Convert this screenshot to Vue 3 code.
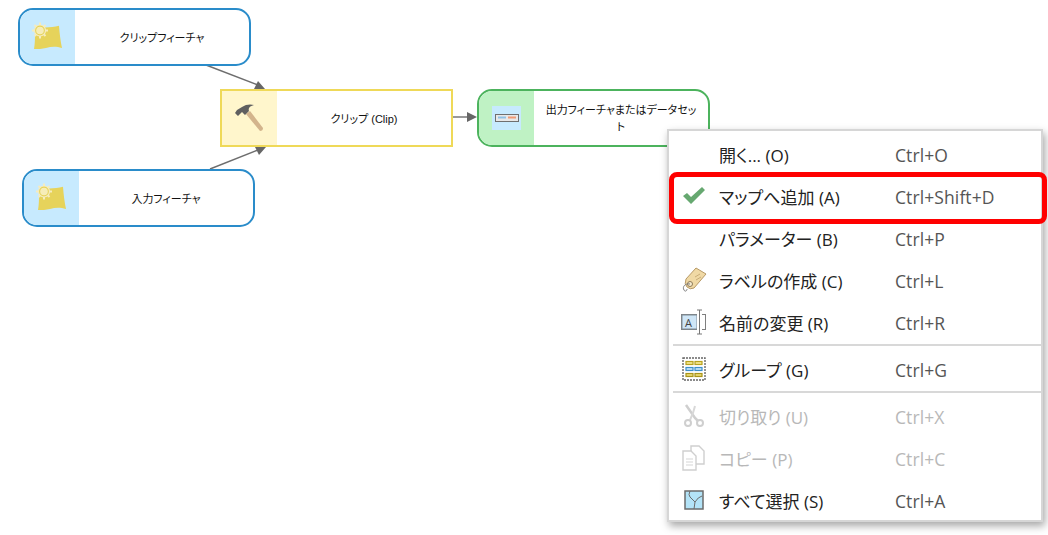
<script setup>
const nodes = [
  { id: 'a', cls: 'data', x: 18, y: 8, label: 'クリップフィーチャ', icon: 'feature' },
  { id: 'b', cls: 'data', x: 22, y: 169, label: '入力フィーチャ', icon: 'feature' },
  { id: 'c', cls: 'tool', x: 220, y: 89, label: 'クリップ (Clip)', icon: 'hammer' },
  { id: 'd', cls: 'out', x: 477, y: 89, label: '出力フィーチャまたはデータセッ\nト', icon: 'out' },
]
const menu = [
  { label: '開く... (O)', key: 'Ctrl+O' },
  { label: 'マップへ追加 (A)', key: 'Ctrl+Shift+D', icon: 'check' },
  { label: 'パラメーター (B)', key: 'Ctrl+P' },
  { label: 'ラベルの作成 (C)', key: 'Ctrl+L', icon: 'tag' },
  { label: '名前の変更 (R)', key: 'Ctrl+R', icon: 'rename', sep: true },
  { label: 'グループ (G)', key: 'Ctrl+G', icon: 'group', sep: true },
  { label: '切り取り (U)', key: 'Ctrl+X', icon: 'cut', off: true },
  { label: 'コピー (P)', key: 'Ctrl+C', icon: 'copy', off: true },
  { label: 'すべて選択 (S)', key: 'Ctrl+A', icon: 'all' },
]
</script>

<template>
  <div class="canvas">
    <svg class="edges" width="1048" height="535">
      <g stroke="#6e6e6e" stroke-width="1.4">
        <line x1="206" y1="65" x2="258" y2="85" />
        <line x1="210" y1="169" x2="258" y2="150" />
        <line x1="453" y1="117" x2="468" y2="117" />
      </g>
      <g fill="#666">
        <polygon points="265,89 254,89 258,81" />
        <polygon points="266,147 255,147 259,155" />
        <polygon points="477,117 467,112 467,122" />
      </g>
    </svg>

    <div
      v-for="n in nodes"
      :key="n.id"
      class="node"
      :class="n.cls"
      :style="{ left: n.x + 'px', top: n.y + 'px' }"
    >
      <div class="swatch">
        <svg v-if="n.icon === 'feature'" width="34" height="32" viewBox="0 0 34 32">
          <path d="M4 12 L9 6 C15 7 22 6 28 4.700 C28.500 12 29.500 20 31 27 C25 25 20 25.500 15 27 C11 28 7 28 3 28 C4 22 4 17 4 12 Z" fill="#e6d35b" />
          <g stroke="#f5ecc0" stroke-width="2">
            <line x1="9" y1="1.500" x2="9" y2="17.500" />
            <line x1="1" y1="9.500" x2="17" y2="9.500" />
            <line x1="3.500" y1="4" x2="14.500" y2="15" />
            <line x1="3.500" y1="15" x2="14.500" y2="4" />
          </g>
          <circle cx="9" cy="9.500" r="5.500" fill="#e6d35b" stroke="#f5ecc0" stroke-width="1.200" />
          <circle cx="9" cy="9.500" r="3.800" fill="#f6edb8" />
        </svg>
        <svg v-else-if="n.icon === 'hammer'" width="34" height="32" viewBox="0 0 34 32">
          <path d="M13 12 L17 9 L30 26 Q30 29 27 29 Z" fill="#d3b48c" />
          <path d="M2 11 L4 8 L9 5 C13 2 18 2 21 3 C17 4 15 6 16 9 L12 13 L9 10 L5 14 Z" fill="#5f5f5f" />
        </svg>
        <div v-else class="out-icon">
          <svg width="24" height="10" viewBox="0 0 24 10">
            <rect x="0.500" y="1.500" width="23" height="7" fill="#e8e8e8" stroke="#6f6f6f" />
            <rect x="3" y="3.500" width="8" height="2" fill="#8fc1e6" />
            <rect x="13" y="3.500" width="8" height="2" fill="#f09a74" />
          </svg>
        </div>
      </div>
      <div class="label">{{ n.label }}</div>
    </div>

    <div class="menu">
      <template v-for="m in menu" :key="m.key">
        <div class="item" :class="{ off: m.off }">
          <span class="ico">
            <svg v-if="m.icon === 'check'" width="24" height="20" viewBox="0 0 24 20">
              <path d="M1 10 L5 7 L9 11 L20 1 L23 4 L9 18 Z" fill="#66a870" />
            </svg>
            <svg v-else-if="m.icon === 'tag'" width="26" height="26" viewBox="0 0 26 26">
              <path d="M15 1 L25 7 L13 21 Q9 23 6 20 Q3 17 5 12 Z" fill="#f0d9a5" stroke="#b89a67" />
              <circle cx="9" cy="17" r="2.500" fill="#f7ecd0" stroke="#8e7a58" />
              <path d="M9 17 C4 16 1 20 3 23 C4 25 6 24 6 22" fill="none" stroke="#7d7d7d" />
              <path d="M14 10 L19 7 M15 13 L20 10" stroke="#c9ad78" />
            </svg>
            <svg v-else-if="m.icon === 'rename'" width="28" height="26" viewBox="0 0 28 26">
              <rect x="1.500" y="5.500" width="24" height="15" fill="#fff" stroke="#7f7f7f" />
              <rect x="2" y="6" width="15" height="14" fill="#cfe6f7" stroke="#7f8b96" />
              <text x="5" y="17.500" class="mini">A</text>
              <rect x="17" y="1" width="5" height="24" fill="#fff" />
              <path d="M17 1 H22 M19.500 1 V25 M17 25 H22" stroke="#777" fill="none" />
            </svg>
            <svg v-else-if="m.icon === 'group'" width="24" height="24" viewBox="0 0 24 24">
              <rect x="1" y="1" width="22" height="22" fill="none" stroke="#666" stroke-width="1.400" stroke-dasharray="2 1" />
              <g stroke-width="1.200">
                <rect x="4" y="4.500" width="7" height="3" fill="#f2e58c" stroke="#b8a21e" />
                <rect x="13" y="4.500" width="7" height="3" fill="#f2e58c" stroke="#b8a21e" />
                <rect x="4" y="10.500" width="7" height="3" fill="#bfe0f6" stroke="#3d8fcb" />
                <rect x="13" y="10.500" width="7" height="3" fill="#bfe0f6" stroke="#3d8fcb" />
                <rect x="4" y="16.500" width="7" height="3" fill="#e8d870" stroke="#a8941a" />
                <rect x="13" y="16.500" width="7" height="3" fill="#e8d870" stroke="#a8941a" />
              </g>
            </svg>
            <svg v-else-if="m.icon === 'cut'" width="22" height="24" viewBox="0 0 22 24">
              <path d="M3 1 L12 14 L15 17" stroke="#cfcfcf" stroke-width="2.500" fill="none" />
              <path d="M12 2 L10 9 L7 16" stroke="#d8d8d8" stroke-width="2" fill="none" />
              <circle cx="5" cy="19" r="3" fill="none" stroke="#cfcfcf" stroke-width="2" />
              <circle cx="17" cy="19" r="3" fill="none" stroke="#cfcfcf" stroke-width="2" />
            </svg>
            <svg v-else-if="m.icon === 'copy'" width="24" height="26" viewBox="0 0 24 26">
              <path d="M9 1 H17 L22 6 V19 H9 Z" fill="#fff" stroke="#cfcfcf" stroke-width="1.400" />
              <path d="M1 6 H9 L14 11 V25 H1 Z" fill="#fff" stroke="#cfcfcf" stroke-width="1.400" />
              <path d="M4 14 H11 M4 17 H11 M4 20 H11" stroke="#d5d5d5" />
            </svg>
            <svg v-else-if="m.icon === 'all'" width="20" height="20" viewBox="0 0 20 20">
              <rect x="1" y="1" width="18" height="18" fill="#b3e3f7" stroke="#6b6b6b" stroke-width="1.500" />
              <path d="M6 1 Q4 5 6 7 L11 12 L10 19 M11 12 Q14 7 18 6" fill="none" stroke="#6b6b6b" />
            </svg>
          </span>
          <span class="text">{{ m.label }}</span>
          <span class="key">{{ m.key }}</span>
        </div>
        <div v-if="m.sep" class="sep"></div>
      </template>
    </div>

    <div class="highlight"></div>
  </div>
</template>

<style>
html, body { background: #fff; }
</style>

<style scoped>
.canvas {
  position: relative;
  width: 1048px;
  height: 535px;
  overflow: hidden;
  background: #fff;
  font-family: "Noto Sans CJK JP", "Open Sans", sans-serif;
  font-feature-settings: "palt";
}
.edges { position: absolute; left: 0; top: 0; }
.node {
  position: absolute;
  width: 233px;
  height: 58px;
  box-sizing: border-box;
  display: flex;
  background: #fff;
  border: 2px solid;
  overflow: hidden;
}
.data { border-color: #2a8cca; border-radius: 15px; }
.data .swatch { background: #c7eafe; }
.tool { border-color: #efd958; border-radius: 0; }
.tool .swatch { background: #fff6cc; }
.out { border-color: #4cb35d; border-radius: 15px; }
.out .swatch { background: #bff2c4; }
.swatch {
  width: 55px;
  flex: none;
  display: flex;
  align-items: center;
  justify-content: center;
}
.out-icon {
  width: 29px;
  height: 24px;
  background: #c7eafe;
  display: flex;
  align-items: center;
  justify-content: center;
}
.label {
  flex: 1;
  min-width: 0;
  padding: 2px 4px 0;
  display: flex;
  align-items: center;
  justify-content: center;
  text-align: center;
  white-space: pre-line;
  font-size: 11px;
  line-height: 17px;
  color: #111;
  font-family: "Liberation Sans", "Noto Sans CJK JP", sans-serif;
}
.menu {
  position: absolute;
  left: 667px;
  top: 129px;
  width: 376px;
  height: 393px;
  box-sizing: border-box;
  padding-top: 2px;
  background: #fff;
  border: 2px solid #d6d6d6;
  box-shadow: 2px 4px 8px rgba(0, 0, 0, 0.35);
}
.item {
  height: 42px;
  display: flex;
  align-items: center;
  font-size: 17px;
  color: #222;
  font-family: "Open Sans", "Noto Sans CJK JP", sans-serif;
}
.ico {
  width: 50px;
  flex: none;
  display: flex;
  justify-content: center;
}
.text { width: 176px; flex: none; }
.key { color: #555; font-size: 17.500px; padding-top: 1px; letter-spacing: 0.1px; }
.off .text, .off .key { color: #b8b8b8; }
.sep {
  height: 2px;
  margin: 1px 0 2px 4px;
  background: #d8d8d8;
}
.mini { font: 11px "Open Sans", sans-serif; fill: #444; }
.highlight {
  position: absolute;
  left: 669px;
  top: 172px;
  width: 378px;
  height: 52px;
  box-sizing: border-box;
  border: 5px solid #f00;
  border-radius: 8px;
}
</style>
